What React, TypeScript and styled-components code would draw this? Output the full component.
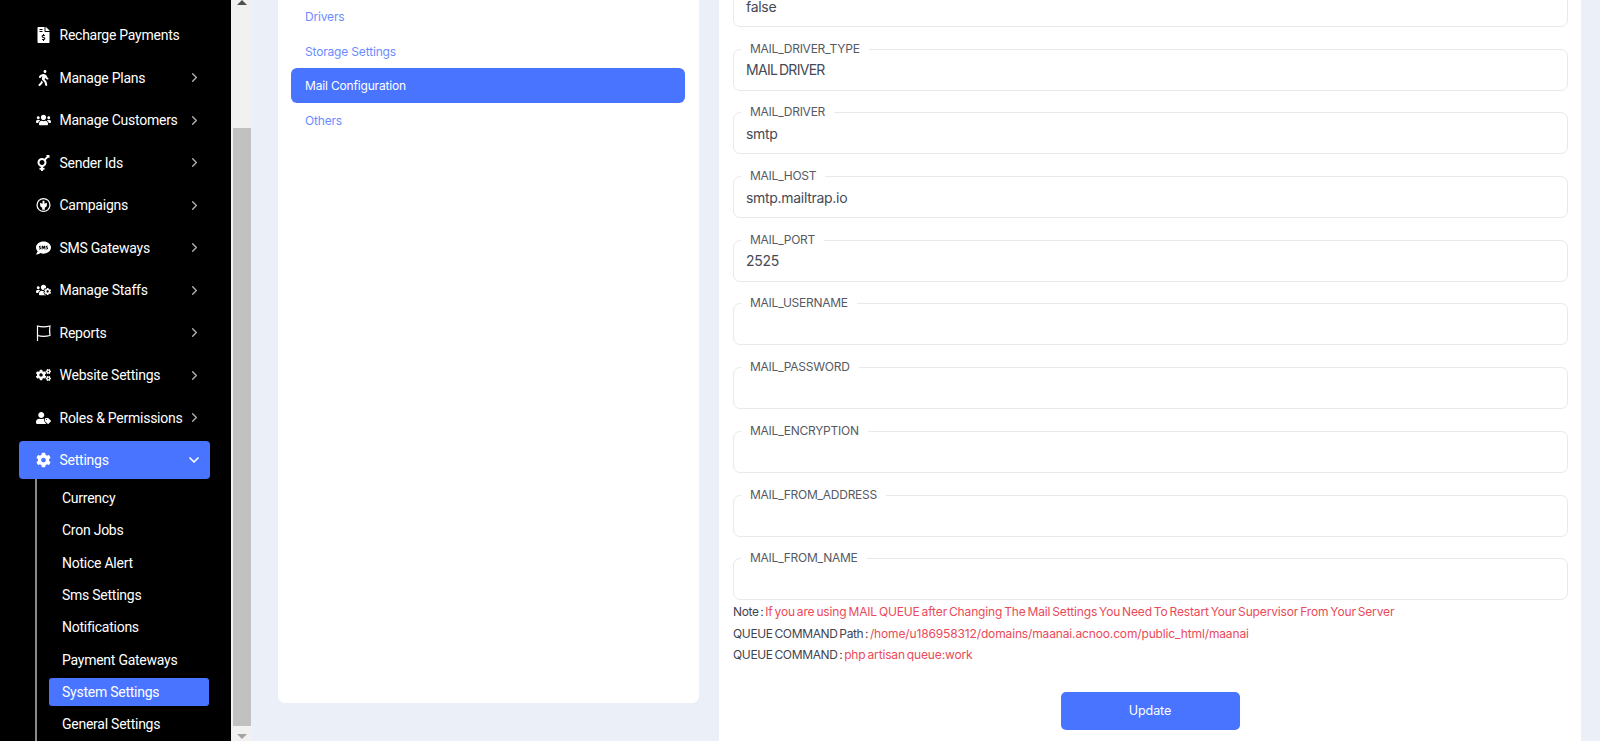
import React from "react";
import styled, { createGlobalStyle } from "styled-components";
import { FaCog, FaCogs, FaFileInvoiceDollar, FaUsers, FaUsersCog, FaUserTag, FaWalking, FaTransgender, FaSms } from "react-icons/fa";
import { LuChevronRight, LuChevronDown } from "react-icons/lu";

const GlobalStyle = createGlobalStyle`
    html, body {
        margin: 0;
        padding: 0;
        height: 741px;
        overflow: hidden;
        background: #ebeff8;
    }
`

const Page = styled.div`
    display: flex;
    width: 1600px;
    height: 741px;
    overflow: hidden;
`

const Sidebar = styled.aside`
    width: 231px;
    flex-shrink: 0;
    background: #000;
    color: #fff;
    font-family: Roboto, sans-serif;
    font-size: 14px;
    font-weight: 400;
    letter-spacing: -0.25px;
    padding-top: 14px;
    box-sizing: border-box;
    overflow: hidden;
`

const MenuRow = styled.div<{ $active?: boolean }>`
    display: flex;
    align-items: center;
    height: ${(p) => (p.$active ? "38px" : "42.5px")};
    margin: ${(p) => (p.$active ? "2px 21px 0 19px" : "0 21px 0 19px")};
    padding-left: 17px;
    padding-right: 8px;
    border-radius: 4px;
    background: ${(p) => (p.$active ? "#4874ff" : "transparent")};
`

const MenuIcon = styled.span`
    display: flex;
    justify-content: center;
    width: 15px;
    margin-right: 8.5px;
    font-size: 16px;
`

const MenuLabel = styled.span`
    flex: 1;
    white-space: nowrap;
`

const SubMenu = styled.div`
    margin-left: 35px;
    border-left: 2px solid #8a8a8a;
    padding-left: 12px;
    margin-right: 22px;
    padding-top: 3px;
    padding-bottom: 40px;
`

const SubRow = styled.div<{ $active?: boolean }>`
    display: flex;
    align-items: center;
    height: ${(p) => (p.$active ? "28px" : "32.3px")};
    margin: ${(p) => (p.$active ? "2.15px 0" : "0")};
    padding-left: 13px;
    border-radius: 3px;
    background: ${(p) => (p.$active ? "#4874ff" : "transparent")};
    white-space: nowrap;
`

const ScrollTrack = styled.div`
    width: 21px;
    flex-shrink: 0;
    background: #f1f1f1;
    display: flex;
    flex-direction: column;
    align-items: center;
`

const ArrowUp = styled.div`
    width: 0;
    height: 0;
    border-left: 5px solid transparent;
    border-right: 5px solid transparent;
    border-bottom: 5px solid #505050;
`

const ScrollThumb = styled.div`
    width: 18px;
    height: 598px;
    margin-top: 123px;
    background: #c1c1c1;
`

const ArrowDown = styled.div`
    width: 0;
    height: 0;
    margin-top: 8px;
    border-left: 5px solid transparent;
    border-right: 5px solid transparent;
    border-top: 5px solid #a3a3a3;
`

const Content = styled.main`
    flex: 1;
    display: flex;
    align-items: flex-start;
    padding-left: 26px;
    padding-right: 19px;
    gap: 20px;
    font-family: Inter, sans-serif;
`

const TabCard = styled.section`
    width: 421px;
    height: 703px;
    box-sizing: border-box;
    flex-shrink: 0;
    background: #fff;
    border-radius: 0 0 7px 7px;
    padding: 0 14px 0 13px;
`

const TabLink = styled.div<{ $active?: boolean }>`
    display: flex;
    align-items: center;
    height: 34.7px;
    padding-left: 14px;
    border-radius: 6px;
    font-size: 12px;
    letter-spacing: -0.17px;
    color: ${(p) => (p.$active ? "#fff" : "#6b8cff")};
    background: ${(p) => (p.$active ? "#4874ff" : "transparent")};

    &:first-child {
        margin-top: -1px;
    }
`

const FormCard = styled.section`
    flex: 1;
    height: 741px;
    background: #fff;
    padding: 0 13px 0 14px;
    box-sizing: border-box;
    overflow: hidden;
`

const FieldList = styled.div`
    display: flex;
    flex-direction: column;
    gap: 21.7px;
    margin-top: -15px;
`

const Field = styled.div`
    position: relative;
    height: 42px;
    box-sizing: border-box;
    border: 1px solid #e8e9ec;
    border-radius: 7px;
    display: flex;
    align-items: center;
    padding-left: 12px;
    font-size: 14px;
    letter-spacing: -0.3px;
    color: #454a55;
`

const CapsValue = styled.span`
    letter-spacing: -0.7px;
    word-spacing: -1.5px;
`

const FieldLabel = styled.span`
    position: absolute;
    left: 7px;
    top: -8px;
    padding: 0 9px;
    background: #fff;
    font-size: 12px;
    line-height: 14px;
    letter-spacing: -0.25px;
    color: #555a64;
`

const NoteBlock = styled.div`
    padding-top: 1px;
    font-size: 12px;
    line-height: 21.5px;
    letter-spacing: -0.35px;
    word-spacing: -1.3px;
    color: #3f4450;
`

const NoteValue = styled.span`
    color: #ea4a5a;
    letter-spacing: -0.14px;
`

const ActionRow = styled.div`
    display: flex;
    justify-content: center;
    margin-top: 26px;
    padding-right: 1px;
`

const UpdateButton = styled.button`
    width: 179px;
    height: 38px;
    border: none;
    border-radius: 5px;
    background: #4874ff;
    color: #fff;
    font-family: Inter, sans-serif;
    font-size: 12.5px;
    letter-spacing: -0.1px;
`

const FlagIcon = () => (
    <svg width="15" height="16" viewBox="0 0 15 16" fill="none" stroke="currentColor" strokeWidth="1.2">
        <path d="M1.5 16V1C5 2 10 2 14 1C13.4 4 13.4 7 14 10.5C10 11.5 5 11.5 1.5 10.5" />
    </svg>
)

const CampaignIcon = () => (
    <svg width="16" height="16" viewBox="0 0 16 16">
        <circle cx="8" cy="8" r="6.9" fill="none" stroke="currentColor" strokeWidth="1.3" />
        <path fill="currentColor" d="M7 3.5h2v3.2l2.6-1v2.4c0 1.4-1 2.4-2.2 2.6V13H6.6v-2.3C5.4 10.500 4.400 9.500 4.400 8.100V5.700L7 6.700z" />
    </svg>
)

const menu = [
    { icon: <FaFileInvoiceDollar />, label: "Recharge Payments", noArrow: true },
    { icon: <FaWalking />, label: "Manage Plans" },
    { icon: <FaUsers />, label: "Manage Customers" },
    { icon: <FaTransgender />, label: "Sender Ids" },
    { icon: <CampaignIcon />, label: "Campaigns" },
    { icon: <FaSms />, label: "SMS Gateways" },
    { icon: <FaUsersCog />, label: "Manage Staffs" },
    { icon: <FlagIcon />, label: "Reports" },
    { icon: <FaCogs />, label: "Website Settings" },
    { icon: <FaUserTag />, label: "Roles & Permissions" },
]

const subMenu = ["Currency", "Cron Jobs", "Notice Alert", "Sms Settings", "Notifications", "Payment Gateways", "System Settings", "General Settings"]

const fields = [
    { label: "", value: "false" },
    { label: "MAIL_DRIVER_TYPE", value: <CapsValue>MAIL DRIVER</CapsValue> },
    { label: "MAIL_DRIVER", value: "smtp" },
    { label: "MAIL_HOST", value: "smtp.mailtrap.io" },
    { label: "MAIL_PORT", value: "2525" },
    { label: "MAIL_USERNAME", value: "" },
    { label: "MAIL_PASSWORD", value: "" },
    { label: "MAIL_ENCRYPTION", value: "" },
    { label: "MAIL_FROM_ADDRESS", value: "" },
    { label: "MAIL_FROM_NAME", value: "" },
]

function App() {
    return (
        <Page>
            <GlobalStyle />
            <Sidebar>
                {menu.map((item) => (
                    <MenuRow key={item.label}>
                        <MenuIcon>{item.icon}</MenuIcon>
                        <MenuLabel>{item.label}</MenuLabel>
                        {!item.noArrow && <LuChevronRight size={15} color="#b5b5b5" />}
                    </MenuRow>
                ))}
                <MenuRow $active>
                    <MenuIcon><FaCog /></MenuIcon>
                    <MenuLabel>Settings</MenuLabel>
                    <LuChevronDown size={16} strokeWidth={2.5} />
                </MenuRow>
                <SubMenu>
                    {subMenu.map((item) => (
                        <SubRow key={item} $active={item === "System Settings"}>{item}</SubRow>
                    ))}
                </SubMenu>
            </Sidebar>
            <ScrollTrack>
                <ArrowUp />
                <ScrollThumb />
                <ArrowDown />
            </ScrollTrack>
            <Content>
                <TabCard>
                    <TabLink>Drivers</TabLink>
                    <TabLink>Storage Settings</TabLink>
                    <TabLink $active>Mail Configuration</TabLink>
                    <TabLink>Others</TabLink>
                </TabCard>
                <FormCard>
                    <FieldList>
                        {fields.map((field, i) => (
                            <Field key={i}>
                                {field.label && <FieldLabel>{field.label}</FieldLabel>}
                                {field.value}
                            </Field>
                        ))}
                    </FieldList>
                    <NoteBlock>
                        <div>Note : <NoteValue>If you are using MAIL QUEUE after Changing The Mail Settings You Need To Restart Your Supervisor From Your Server</NoteValue></div>
                        <div>QUEUE COMMAND Path : <NoteValue>/home/u186958312/domains/maanai.acnoo.com/public_html/maanai</NoteValue></div>
                        <div>QUEUE COMMAND : <NoteValue>php artisan queue:work</NoteValue></div>
                    </NoteBlock>
                    <ActionRow>
                        <UpdateButton>Update</UpdateButton>
                    </ActionRow>
                </FormCard>
            </Content>
        </Page>
    )
}

export default App
